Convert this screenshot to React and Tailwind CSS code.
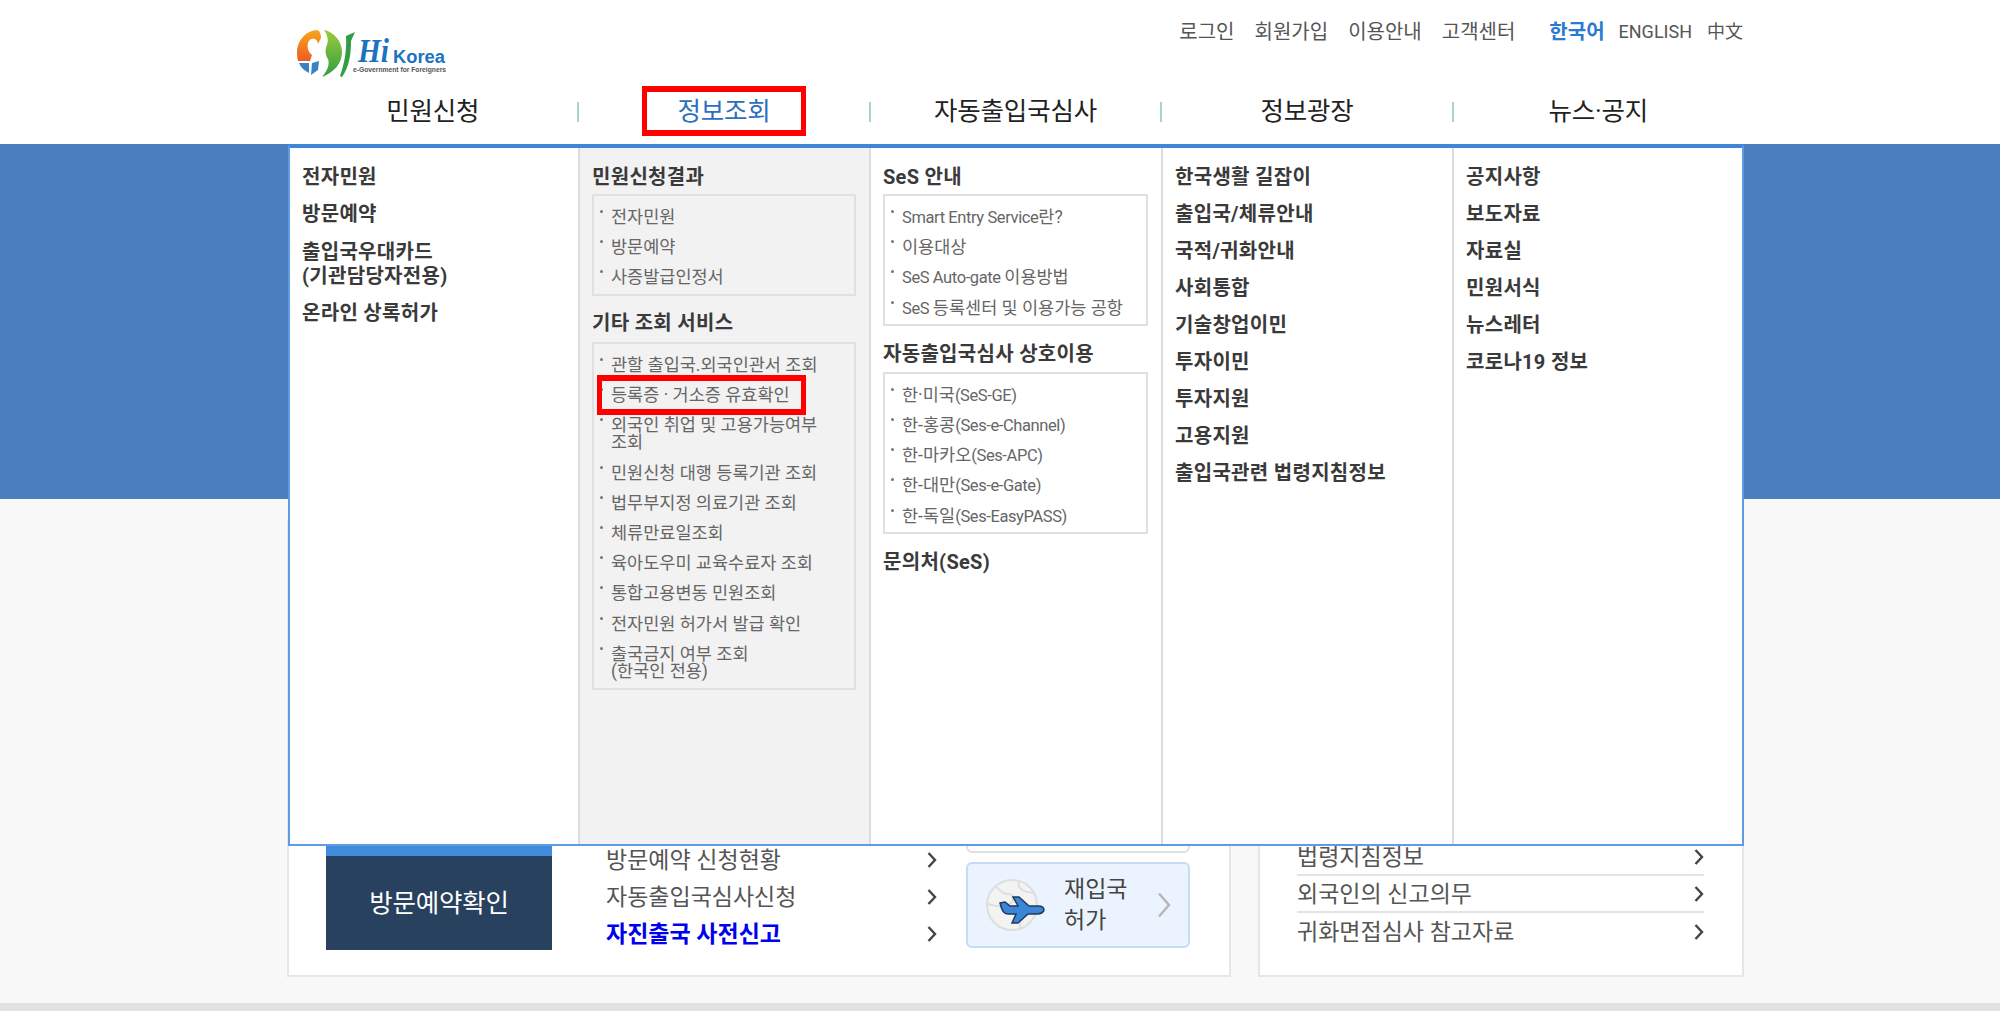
import React from 'react';

const font = { fontFamily: 'Roboto, "Noto Sans CJK KR", "Liberation Sans", sans-serif' };

function Logo() {
  return (
    <svg width="152" height="52" viewBox="0 0 152 52" className="block">
      <defs>
        <linearGradient id="lo" x1="0" y1="0" x2="0" y2="1">
          <stop offset="0" stopColor="#f7a81e" />
          <stop offset="1" stopColor="#ef5a24" />
        </linearGradient>
        <linearGradient id="lg" x1="0" y1="0" x2="0" y2="1">
          <stop offset="0" stopColor="#9ccb3b" />
          <stop offset="1" stopColor="#2f9e44" />
        </linearGradient>
      </defs>
      <path d="M20 3C8 4 0 14 0 26c0 3 .5 6 1 8h12l2-6c-4-3-5-8-4-12 1-4 4-5 7-4 2 1 3 3 3 5l3-6c0-4-1-7-4-8z" fill="url(#lo)" />
      <path d="M2 36h10v10c-4-2-8-5-10-10zM15 36l7-2-1 9-7 5z" fill="#3b82c4" />
      <path d="M27 3c10 2 18 11 18 22 0 12-8 20-20 25 5-6 8-12 6-18-3-4-3-10-1-14 2-5 0-11-3-15z" fill="url(#lg)" />
      <path d="M49 9l9-4-4 9c0 14-2 26-9 36l-2-1c4-11 7-25 6-40z" fill="#2f9e44" />
      <text x="61" y="35" fill="#1a73bf" fontFamily="Liberation Serif" fontStyle="italic" fontWeight="700" fontSize="34" textLength="31" lengthAdjust="spacingAndGlyphs">Hi</text>
      <text x="96" y="36" fill="#1a73bf" fontFamily="Liberation Sans" fontWeight="700" fontSize="18" textLength="52" lengthAdjust="spacingAndGlyphs">Korea</text>
      <text x="56" y="45" fill="#555" fontFamily="Liberation Sans" fontWeight="700" fontSize="6.5" textLength="93" lengthAdjust="spacingAndGlyphs">e-Government for Foreigners</text>
    </svg>
  );
}

function Chevron({ className = '' }) {
  return (
    <svg width="10" height="16" viewBox="0 0 10 16" className={`shrink-0 ${className}`}>
      <path d="M1.5 1 8 8 1.5 15" fill="none" stroke="#444" strokeWidth="2.4" />
    </svg>
  );
}

function Tile() {
  return (
    <div className="h-[86px] rounded-[6px] border-2 border-[#c5dcf5] bg-[#ebf3fe] flex items-center pl-[18px]">
      <svg width="60" height="52" viewBox="0 0 60 52" className="shrink-0">
        <circle cx="26" cy="26" r="25" fill="#f3f3f3" stroke="#dedede" strokeWidth="2" />
        <path d="M10 7c5 7 9 9 14 8 6 3 3 9-3 11-6 3-13 1-19-1M33 2c-3 9 9 12 16 12M28 34c6 3 8 9 5 17" fill="none" stroke="#dedede" strokeWidth="2" />
        <path d="M14 24l5-1 5 4h8l-5-9h6l10 9h9c4 0 6 2 6 4s-3 4-7 4h-9l-10 9h-6l4-9h-8c-4 0-6-3-8-11z" fill="#3a86d8" stroke="#1f3a5c" strokeWidth="1.5" />
      </svg>
      <div className="ml-[18px] w-[93px] text-[23px] leading-[31px] text-[#444]">재입국<br />허가</div>
      <svg width="14" height="26" viewBox="0 0 14 26" className="shrink-0">
        <path d="M2 1.5 12 13 2 24.5" fill="none" stroke="#b5b5b5" strokeWidth="2.4" />
      </svg>
    </div>
  );
}

const col1 = [['전자민원'], ['방문예약'], ['출입국우대카드', '(기관담당자전용)'], ['온라인 상록허가']];
const col4 = ['한국생활 길잡이', '출입국/체류안내', '국적/귀화안내', '사회통합', '기술창업이민', '투자이민', '투자지원', '고용지원', '출입국관련 법령지침정보'];
const col5 = ['공지사항', '보도자료', '자료실', '민원서식', '뉴스레터', '코로나19 정보'];
const sub1 = ['전자민원', '방문예약', '사증발급인정서'];
const sub2 = [
  ['관할 출입국.외국인관서 조회'],
  ['등록증 · 거소증 유효확인'],
  ['외국인 취업 및 고용가능여부', '조회'],
  ['민원신청 대행 등록기관 조회'],
  ['법무부지정 의료기관 조회'],
  ['체류만료일조회'],
  ['육아도우미 교육수료자 조회'],
  ['통합고용변동 민원조회'],
  ['전자민원 허가서 발급 확인'],
  ['출국금지 여부 조회', '(한국인 전용)'],
];
const sub3 = ['Smart Entry Service란?', '이용대상', 'SeS Auto-gate 이용방법', 'SeS 등록센터 및 이용가능 공항'];
const sub4 = ['한·미국(SeS-GE)', '한-홍콩(Ses-e-Channel)', '한-마카오(Ses-APC)', '한-대만(Ses-e-Gate)', '한-독일(Ses-EasyPASS)'];

function Mixed({ text }) {
  return text.split(/([A-Za-z(][A-Za-z()\- ]+)/).map((part, i) =>
    i % 2 ? <span key={i} className="text-[16.5px] tracking-[-0.4px]">{part}</span> : part
  );
}

function Head({ children }) {
  return <div className="text-[20px] leading-[37px] font-bold text-[#3a3a3a] tracking-[0.3px] whitespace-nowrap">{children}</div>;
}

function SubBox({ items, className = '' }) {
  return (
    <ul className={`border-2 border-[#e0e0e0] pt-[5px] pb-[2px] ${className}`}>
      {items.map((it, i) => {
        const lines = Array.isArray(it) ? it : [it];
        return (
          <li key={i} className="relative pl-[17px] pt-[8px] pb-[4.7px] text-[17.5px] leading-[17.5px] text-[#666] whitespace-nowrap">
            <span className="absolute left-[6px] top-[9px] w-[3px] h-[3px] rounded-full bg-[#777]" />
            {lines.map((l, j) => <div key={j}><Mixed text={l} /></div>)}
          </li>
        );
      })}
    </ul>
  );
}

function NavItem({ children, blue }) {
  return (
    <div className={`flex-1 flex items-center justify-center text-[25.5px] tracking-[-0.2px] ${blue ? 'text-[#2b6fbe]' : 'text-[#222]'}`}>{children}</div>
  );
}

function Sep() {
  return <div className="w-[2px] h-[20px] mt-[16px] bg-[#a9d2d4]" />;
}

export default function App() {
  return (
    <div style={font} className="relative w-[2000px] h-[1011px] overflow-hidden bg-[#f8f8f8]">
      <header className="h-[144px] bg-white pl-[288px]">
        <div className="w-[1455px] h-[86px] flex items-start justify-between">
          <div className="pl-[9px] pt-[27px]"><Logo /></div>
          <div className="flex items-center pt-[17px] text-[20px] leading-[30px] text-[#555]">
            <span className="mr-[20px]">로그인</span>
            <span className="mr-[20px]">회원가입</span>
            <span className="mr-[20px]">이용안내</span>
            <span className="mr-[34px]">고객센터</span>
            <span className="mr-[14px] font-bold text-[#2a7bd0]">한국어</span>
            <span className="mr-[15px] text-[18px]">ENGLISH</span>
            <span className="text-[18px]">中文</span>
          </div>
        </div>
        <nav className="w-[1455px] h-[50px] flex">
          <NavItem>민원신청</NavItem>
          <Sep />
          <NavItem blue>정보조회</NavItem>
          <Sep />
          <NavItem>자동출입국심사</NavItem>
          <Sep />
          <NavItem>정보광장</NavItem>
          <Sep />
          <NavItem>뉴스·공지</NavItem>
        </nav>
      </header>

      <div className="h-[355px] bg-[#4a80bd]" />

      <main className="h-[504px] pl-[287px] pt-[21px] flex gap-[27px]">
        <section className="w-[944px] h-[457px] bg-white border-2 border-[#e6e6e6] flex items-end pb-[25px] pl-[37px]">
          <div className="w-[226px] flex flex-col">
            <div className="h-[200px] bg-[#418bdb]" />
            <div className="h-[94px] bg-[#27415e] flex items-center justify-center text-[25.5px] tracking-[-0.2px] text-white">방문예약확인</div>
          </div>
          <div className="w-[336px] ml-[54px] -mb-[4px]">
            {[['방문예약 신청현황', false], ['자동출입국심사신청', false], ['자진출국 사전신고', true]].map(([t, b]) => (
              <div key={t} className={`h-[37px] flex items-center justify-between pr-[5px] text-[23px] ${b ? 'font-bold text-[#0000ee]' : 'text-[#555]'}`}>
                {t}<Chevron className="-mt-[4px]" />
              </div>
            ))}
          </div>
          <div className="w-[224px] ml-[24px] mb-[2px] flex flex-col gap-[9px]">
            <div className="h-[100px] rounded-[6px] border-2 border-[#e0e0e0] bg-white" />
            <Tile />
          </div>
        </section>
        <section className="w-[486px] h-[457px] bg-white border-2 border-[#e6e6e6] flex flex-col justify-end pb-[25px] pl-[37px] pr-[38px]">
          {['법령지침정보', '외국인의 신고의무', '귀화면접심사 참고자료'].map((t, i) => (
            <div key={t} className={`h-[37px] pt-[3px] flex items-center justify-between text-[23px] text-[#555] ${i < 2 ? 'border-b-2 border-[#e3e3e3]' : ''}`}>
              {t}<Chevron className="-mt-[2px]" />
            </div>
          ))}
        </section>
      </main>

      <div className="h-[8px] bg-[#e2e2e2]" />

      {/* opened mega menu over the page */}
      <div className="absolute left-[288px] top-[144px] w-[1456px] h-[702px] bg-white border-x-2 border-b-2 border-[#5f9de3] border-t-4 border-t-[#3e86d8] grid grid-cols-[288px_291px_292px_291px_1fr]">
        <div className="pl-[12px] pt-[10.5px]">
          {col1.map((lines, i) => (
            <div key={i} className={lines.length > 1 ? 'py-[7px]' : ''}>
              {lines.map((l) => (
                <div key={l} className={`text-[20px] font-bold text-[#3a3a3a] tracking-[0.3px] ${lines.length > 1 ? 'leading-[24px]' : 'leading-[37px]'}`}>{l}</div>
              ))}
            </div>
          ))}
        </div>
        <div className="border-l-2 border-[#dcdcdc] bg-[#f2f2f2] pl-[12px] pr-[13px] pt-[10.5px]">
          <Head>민원신청결과</Head>
          <SubBox items={sub1} className="mt-[-1.5px]" />
          <div className="mt-[9.5px]"><Head>기타 조회 서비스</Head></div>
          <SubBox items={sub2} className="mt-[-0.5px] pb-[3px]" />
        </div>
        <div className="border-l-2 border-[#dcdcdc] pl-[12px] pr-[13px] pt-[10.5px]">
          <Head>SeS 안내</Head>
          <SubBox items={sub3} className="mt-[-1.5px]" />
          <div className="mt-[10.5px]"><Head>자동출입국심사 상호이용</Head></div>
          <SubBox items={sub4} className="mt-[-1.5px]" />
          <div className="mt-[10.5px]"><Head>문의처(SeS)</Head></div>
        </div>
        <div className="border-l-2 border-[#dcdcdc] pl-[12px] pt-[10.5px]">
          {col4.map((t) => <Head key={t}>{t}</Head>)}
        </div>
        <div className="border-l-2 border-[#dcdcdc] pl-[12px] pt-[10.5px]">
          {col5.map((t) => <Head key={t}>{t}</Head>)}
        </div>
      </div>

      {/* red annotation boxes */}
      <div className="absolute left-[642px] top-[86px] w-[164px] h-[50px] border-x-[5px] border-y-[6px] border-[#ff0000]" />
      <div className="absolute left-[597px] top-[375px] w-[209px] h-[40px] border-x-[5px] border-y-[6px] border-[#ff0000]" />
    </div>
  );
}
